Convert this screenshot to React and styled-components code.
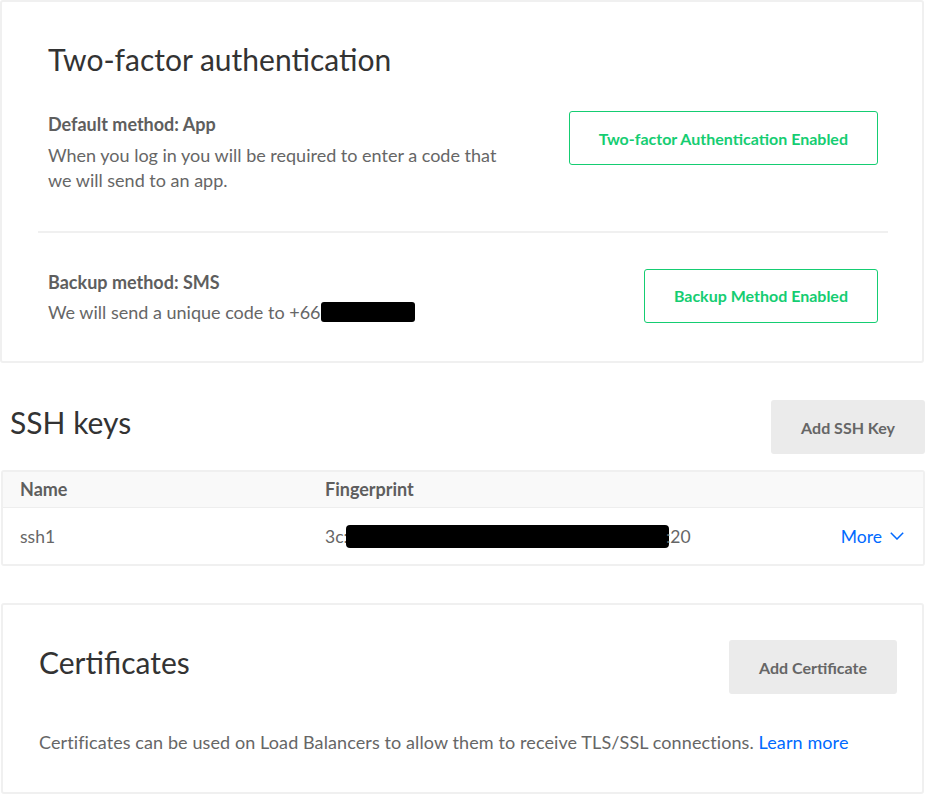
import React from "react";
import styled, { createGlobalStyle } from "styled-components";

const GlobalStyle = createGlobalStyle`
  html, body { margin: 0; padding: 0; background: #ffffff; }
  body {
    font-family: Lato, "Open Sans", "Liberation Sans", sans-serif;
    color: #666666;
    -webkit-font-smoothing: antialiased;
  }
  * { box-sizing: border-box; }
`;

const Page = styled.div`
  width: 926px;
  display: flex;
  flex-direction: column;
`;

const Card = styled.section`
  width: ${(p) => p.$width || 924}px;
  margin-left: ${(p) => p.$offset || 0}px;
  margin-top: ${(p) => p.$top || 0}px;
  border: 2px solid #f0f0f0;
  border-radius: 3px;
  background: #fff;
  padding: ${(p) => p.$padding};
`;

const Title = styled.h2`
  margin: 0;
  margin-left: ${(p) => p.$indent || 0}px;
  font-size: 30px;
  line-height: 34px;
  font-weight: 400;
  color: #333333;
`;

const MethodRow = styled.div`
  display: flex;
  justify-content: space-between;
  align-items: flex-start;
  padding: ${(p) => p.$padding};
  border-bottom: ${(p) => (p.$divider ? "2px solid #f0f0f0" : "none")};
`;

const MethodText = styled.div`
  padding-top: 1px;
  max-width: 462px;
`;

const Label = styled.div`
  font-size: 18px;
  line-height: 24px;
  font-weight: 700;
  color: #5e5e5e;
`;

const Text = styled.p`
  margin: 6.5px 0 0;
  font-size: 18px;
  line-height: 25px;
  color: #666666;
`;

const Redacted = styled.span`
  display: inline-block;
  width: ${(p) => p.$w}px;
  height: ${(p) => p.$h}px;
  background: #000;
  border-radius: ${(p) => p.$r || 3}px;
  vertical-align: ${(p) => p.$va}px;
  margin-left: ${(p) => p.$ml || 0}px;
  margin-right: ${(p) => p.$mr || 0}px;
`;

const OutlineButton = styled.button`
  height: 54px;
  padding: 0 29px;
  border: 1px solid #15cd72;
  border-radius: 3px;
  background: #fff;
  color: #15cd72;
  font-family: inherit;
  font-size: 16px;
  font-weight: 700;
  cursor: pointer;
`;

const GreyButton = styled.button`
  height: 54px;
  padding: 0 30px;
  border: none;
  border-radius: 3px;
  background: #ebebeb;
  color: #666666;
  font-family: inherit;
  font-size: 16px;
  font-weight: 700;
  cursor: pointer;
`;

const SectionHeader = styled.div`
  display: flex;
  justify-content: space-between;
  align-items: baseline;
  padding-left: ${(p) => p.$indent || 0}px;
`;

const SshSection = styled.section`
  margin-top: 37px;
  width: 925px;
`;

const Table = styled.div`
  margin: 16px 0 0 1px;
  width: 924px;
  border: 2px solid #f0f0f0;
  border-radius: 3px;
  overflow: hidden;
`;

const TableRow = styled.div`
  display: grid;
  grid-template-columns: 305px 1fr auto;
  align-items: center;
  padding: ${(p) => (p.$head ? "0 19px 2px 17px" : "0 19px 0 17px")};
  height: ${(p) => (p.$head ? 36 : 56)}px;
  background: ${(p) => (p.$head ? "#f9f9f9" : "#fff")};
  border-bottom: ${(p) => (p.$head ? "1px solid #eeeeee" : "none")};
  font-size: ${(p) => (p.$head ? 18 : 17.5)}px;
  font-weight: ${(p) => (p.$head ? 700 : 400)};
  color: ${(p) => (p.$head ? "#5e5e5e" : "#666666")};
`;

const Cell = styled.div`
  white-space: nowrap;
`;

const MoreLink = styled.a`
  display: inline-flex;
  align-items: center;
  gap: 8px;
  color: #0069ff;
  text-decoration: none;
  cursor: pointer;
`;

const Description = styled.p`
  margin: 35.5px 0 0;
  font-size: 18px;
  line-height: 25px;
  letter-spacing: 0.1px;
  color: #666666;
`;

const Link = styled.a`
  color: #0069ff;
  text-decoration: none;
`;

export default function App() {
  return (
    <Page>
      <GlobalStyle />
      <Card $padding="40px 34px 0 36px">
        <Title $indent={10}>Two-factor authentication</Title>
        <MethodRow $divider $padding="35px 10px 38px">
          <MethodText>
            <Label>Default method: App</Label>
            <Text>
              When you log in you will be required to enter a code that we will
              send to an app.
            </Text>
          </MethodText>
          <OutlineButton>Two-factor Authentication Enabled</OutlineButton>
        </MethodRow>
        <MethodRow $padding="36px 10px 36px">
          <MethodText>
            <Label>Backup method: SMS</Label>
            <Text>
              We will send a unique code to +66
              <Redacted $w={94} $h={20} $va={-3} />
            </Text>
          </MethodText>
          <OutlineButton>Backup Method Enabled</OutlineButton>
        </MethodRow>
      </Card>

      <SshSection>
        <SectionHeader $indent={10}>
          <Title>SSH keys</Title>
          <GreyButton>Add SSH Key</GreyButton>
        </SectionHeader>
        <Table>
          <TableRow $head>
            <Cell>Name</Cell>
            <Cell>Fingerprint</Cell>
            <Cell />
          </TableRow>
          <TableRow>
            <Cell>ssh1</Cell>
            <Cell>
              3c:
              <Redacted $w={323} $h={23} $r={4} $va={-5} $ml={-2} $mr={-3} />
              :20
            </Cell>
            <Cell>
              <MoreLink>
                More
                <svg width="14" height="8" viewBox="0 0 14 8" fill="none">
                  <polyline
                    points="0.8,0.8 7,7 13.2,0.8"
                    stroke="#0069ff"
                    strokeWidth="1.5"
                  />
                </svg>
              </MoreLink>
            </Cell>
          </TableRow>
        </Table>
      </SshSection>

      <Card $width={923} $offset={1} $top={37} $padding="35px 25px 37px 36px">
        <SectionHeader>
          <Title>Certificates</Title>
          <GreyButton>Add Certificate</GreyButton>
        </SectionHeader>
        <Description>
          Certificates can be used on Load Balancers to allow them to receive
          TLS/SSL connections. <Link>Learn more</Link>
        </Description>
      </Card>
    </Page>
  );
}
